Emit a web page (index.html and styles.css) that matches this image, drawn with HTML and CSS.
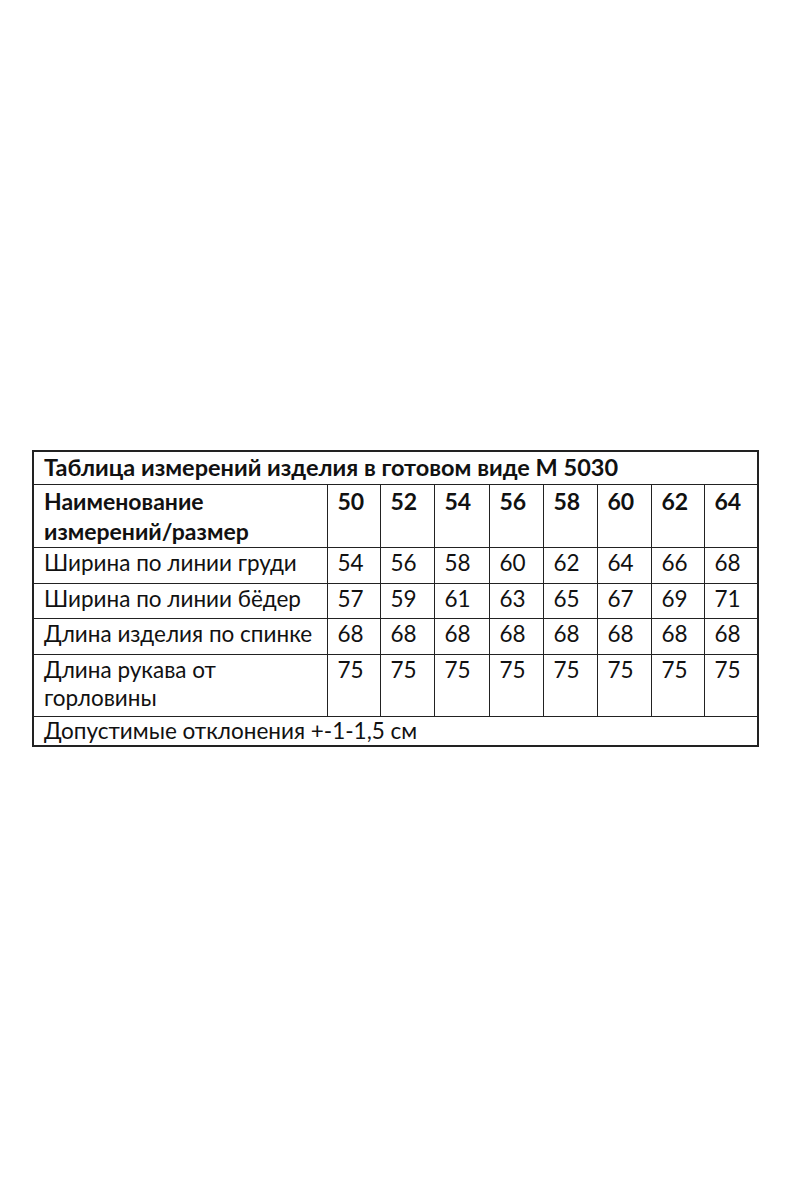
FILE: index.html
```html
<!DOCTYPE html>
<html lang="ru">
<head>
<meta charset="utf-8">
<link rel="stylesheet" href="styles.css">
</head>
<body>
<div class="page">
<table class="sizes">
<colgroup>
<col class="c-name"><col class="c53"><col class="c54"><col class="c55"><col class="c54"><col class="c54"><col class="c54"><col class="c53"><col class="c54">
</colgroup>
<tr class="r-title"><td colspan="9" class="b">Таблица измерений изделия в готовом виде М 5030</td></tr>
<tr class="r-head b"><td>Наименование<br>измерений/размер</td><td>50</td><td>52</td><td>54</td><td>56</td><td>58</td><td>60</td><td>62</td><td>64</td></tr>
<tr class="r-a"><td>Ширина по линии груди</td><td>54</td><td>56</td><td>58</td><td>60</td><td>62</td><td>64</td><td>66</td><td>68</td></tr>
<tr class="r-b"><td>Ширина по линии бёдер</td><td>57</td><td>59</td><td>61</td><td>63</td><td>65</td><td>67</td><td>69</td><td>71</td></tr>
<tr class="r-a"><td>Длина изделия по спинке</td><td>68</td><td>68</td><td>68</td><td>68</td><td>68</td><td>68</td><td>68</td><td>68</td></tr>
<tr class="r-tall"><td>Длина рукава от<br>горловины</td><td>75</td><td>75</td><td>75</td><td>75</td><td>75</td><td>75</td><td>75</td><td>75</td></tr>
<tr class="r-foot"><td colspan="9">Допустимые отклонения +-1-1,5 см</td></tr>
</table>
</div>
</body>
</html>
```
FILE: styles.css
```css
html, body { margin: 0; padding: 0; background: #fff; }
.page { padding: 450px 0 0 32px; }
.sizes {
  border-collapse: collapse;
  table-layout: fixed;
  width: 725px;
  border: 2px solid #222;
  font-family: Lato, "Noto Sans", sans-serif;
  font-size: 22.5px;
  color: #111;
}
.c-name { width: 294px; }
.c53 { width: 53px; }
.c54 { width: 54px; }
.c55 { width: 55px; }
.sizes td {
  border: 1px solid #222;
  padding: 1px 0 0 10px;
  vertical-align: top;
  line-height: 28px;
  white-space: nowrap;
  overflow: visible;
}
.b, .b td { font-weight: bold; }
.r-title td { height: 31px; font-size: 23.5px; }
.r-head td { height: 61px; line-height: 30px; font-size: 23px; }
.r-a td { height: 34px; }
.r-b td { height: 33px; }
.r-tall td { height: 60px; }
.r-foot td { height: 28px; padding-top: 0; }
```
